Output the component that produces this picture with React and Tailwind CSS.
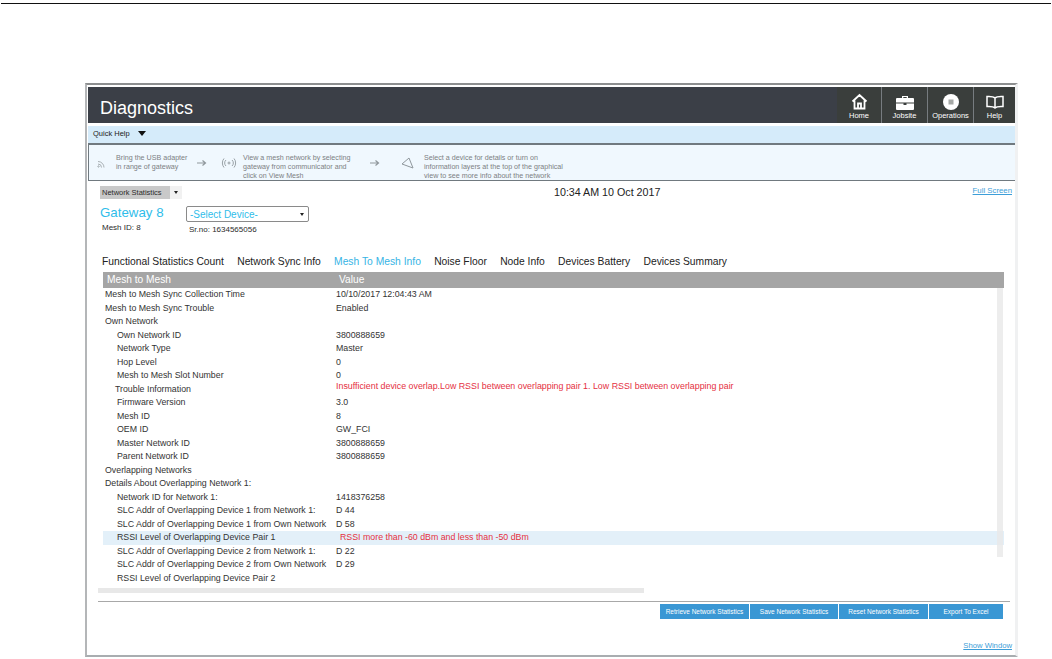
import React from 'react'

const rows = [
  ['Mesh to Mesh Sync Collection Time', '10/10/2017 12:04:43 AM', 0],
  ['Mesh to Mesh Sync Trouble', 'Enabled', 0],
  ['Own Network', '', 0],
  ['Own Network ID', '3800888659', 1],
  ['Network Type', 'Master', 1],
  ['Hop Level', '0', 1],
  ['Mesh to Mesh Slot Number', '0', 1],
  ['Trouble Information', 'Insufficient device overlap.Low RSSI between overlapping pair 1. Low RSSI between overlapping pair', 2],
  ['Firmware Version', '3.0', 1],
  ['Mesh ID', '8', 1],
  ['OEM ID', 'GW_FCI', 1],
  ['Master Network ID', '3800888659', 1],
  ['Parent Network ID', '3800888659', 1],
  ['Overlapping Networks', '', 0],
  ['Details About Overlapping Network 1:', '', 0],
  ['Network ID for Network 1:', '1418376258', 1],
  ['SLC Addr of Overlapping Device 1 from Network 1:', 'D 44', 1],
  ['SLC Addr of Overlapping Device 1 from Own Network', 'D 58', 1],
  ['RSSI Level of Overlapping Device Pair 1', 'RSSI more than -60 dBm and less than -50 dBm', 3],
  ['SLC Addr of Overlapping Device 2 from Network 1:', 'D 22', 1],
  ['SLC Addr of Overlapping Device 2 from Own Network', 'D 29', 1],
  ['RSSI Level of Overlapping Device Pair 2', '', 1],
]

const tabs = ['Functional Statistics Count', 'Network Sync Info', 'Mesh To Mesh Info', 'Noise Floor', 'Node Info', 'Devices Battery', 'Devices Summary']

const buttons = [
  ['Retrieve Network Statistics', 'w-[89px]'],
  ['Save Network Statistics', 'w-[88px]'],
  ['Reset Network Statistics', 'w-[89px]'],
  ['Export To Excel', 'w-[74px]'],
]

const NavItem = ({ label, className, children }) => (
  <div className={`flex flex-col items-center justify-end pb-[2px] bg-[#3a3e3c] text-white text-[7.500px] leading-[10px] ${className}`}>
    {children}
    <span className="mt-[1px]">{label}</span>
  </div>
)

const Arrow = () => (
  <svg className="shrink-0" width="10" height="8" viewBox="0 0 10 8" fill="none" stroke="#8f979c" strokeWidth="1.2">
    <path d="M0 4h8M5.500 1.500 8.500 4l-3 2.500" />
  </svg>
)

const App = () => {
  return (
    <div className="relative w-[1052px] h-[659px] overflow-hidden bg-white text-[#2b2b2b]" style={{ fontFamily: '"Liberation Sans", Arial, sans-serif' }}>
      <div className="h-[4px] mx-[1px] border-b border-[#111]" />
      <div className="ml-[85px] mt-[79px] w-[933px] h-[574px] bg-white border-t-2 border-t-[#8d8f90] border-b-2 border-b-[#a9adb0] border-l-2 border-l-[#b4b6b8] border-r-[3px] border-r-[#f0f1f2] pl-[1px] pt-[2px]">
        <div className="h-[36px] bg-[#3b3f47] flex justify-between">
          <div className="pl-[12px] pt-[8px] text-white text-[18px] leading-[26px]">Diagnostics</div>
          <div className="flex">
            <NavItem label="Home" className="w-[44px]">
              <svg width="17" height="17" viewBox="0 0 17 17" fill="none" stroke="white" strokeWidth="1.8">
                <path d="M1.500 8.500 8.500 2l7 6.500M3.500 7.500v8h10v-8M7 15.500v-5h3v5" />
              </svg>
            </NavItem>
            <NavItem label="Jobsite" className="w-[46px] border-l border-[#777c80]">
              <svg width="18" height="15" viewBox="0 0 18 15" fill="white">
                <path d="M6 3V1h6v2h5a1 1 0 0 1 1 1v3.500H0V4a1 1 0 0 1 1-1zM7.300 3h3.400V2H7.300zM0 8.500h7.500V10h3V8.500H18V14a1 1 0 0 1-1 1H1a1 1 0 0 1-1-1z" />
              </svg>
            </NavItem>
            <NavItem label="Operations" className="w-[46px] border-l border-[#777c80]">
              <svg width="16" height="16" viewBox="0 0 16 16">
                <circle cx="8" cy="8" r="8" fill="white" />
                <rect x="5.500" y="5.500" width="5" height="5" fill="#a5a8a6" />
              </svg>
            </NavItem>
            <NavItem label="Help" className="w-[42px] border-l border-[#777c80]">
              <svg width="18" height="15" viewBox="0 0 18 15" fill="none" stroke="white" strokeWidth="1.500">
                <path d="M9 3C7.500 1.500 4 1.300 1 1.500v10c3-.2 6.500 0 8 1.500 1.500-1.500 5-1.700 8-1.500v-10C14 1.300 10.500 1.500 9 3zM9 3v10" />
              </svg>
            </NavItem>
          </div>
        </div>
        <div className="mt-[3px] h-[19px] bg-[#d5ebfa] border-b-2 border-[#70797f] flex items-center pl-[5px] pb-[2px] text-[7.500px] text-[#222]">
          Quick Help
          <span className="ml-[8px] w-0 h-0 border-l-[4px] border-r-[4px] border-t-[5px] border-l-transparent border-r-transparent border-t-[#111]" />
        </div>
        <div className="h-[36px] bg-[#f0f8fe] border-b border-l border-[#70797f] flex items-center pl-[8px] text-[7.150px] leading-[9px] text-[#7d8083]">
          <svg className="shrink-0" width="10" height="10" viewBox="0 0 10 10" fill="none" stroke="#a9b0b4" strokeWidth="1">
            <path d="M1 3.500a6 6 0 0 1 6 6M1 6a3.500 3.500 0 0 1 3.500 3.500" />
            <circle cx="1.500" cy="8.500" r="0.700" />
          </svg>
          <p className="ml-[9px] w-[81px] self-start mt-[9px]">Bring the USB adapter<br />in range of gateway</p>
          <Arrow />
          <svg className="ml-[14px] shrink-0" width="16" height="10" viewBox="0 0 16 10" fill="none" stroke="#8f979c" strokeWidth="0.900">
            <circle cx="8" cy="5" r="1" />
            <path d="M5 2a4 4 0 0 0 0 6M11 2a4 4 0 0 1 0 6M3 .5a7 7 0 0 0 0 9M13 .5a7 7 0 0 1 0 9" />
          </svg>
          <p className="ml-[6px] w-[127px] self-start mt-[9px]">View a mesh network by selecting<br />gateway from communicator and<br />click on View Mesh</p>
          <Arrow />
          <svg className="ml-[21px] shrink-0" width="14" height="14" viewBox="0 0 14 14" fill="none" stroke="#8f979c" strokeWidth="1">
            <path d="M1 8 8 2l4 10z" />
          </svg>
          <p className="ml-[9px] self-start mt-[9px]">Select a device for details or turn on<br />information layers at the top of the graphical<br />view to see more info about the network</p>
        </div>
        <div className="flex h-[13px] mt-[5px] pl-[12px]">
          <div className="w-[70px] bg-[#c9c9c9] text-[7.500px] leading-[13px] pl-[2px]">Network Statistics</div>
          <div className="w-[12px] bg-[#f1f1f1] flex items-center justify-center">
            <span className="w-0 h-0 border-l-[2.500px] border-r-[2.500px] border-t-[3px] border-l-transparent border-r-transparent border-t-[#222]" />
          </div>
          <div className="ml-[372px] text-[10.700px] leading-[13px] text-[#222]">10:34 AM 10 Oct 2017</div>
          <a className="ml-auto mr-[3px] text-[7.800px] leading-[10px] underline text-[#3d9ed8]">Full Screen</a>
        </div>
        <div className="flex pl-[12px] mt-[7px]">
          <div className="w-[86px] -mt-[1px]">
            <div className="text-[#2fbdea] text-[13.300px] leading-[16px]">Gateway 8</div>
            <div className="text-[8px] leading-[10px] mt-[2px] pl-[2px]">Mesh ID: 8</div>
          </div>
          <div>
            <div className="w-[123px] h-[16px] border border-[#8a8a8a] rounded-[2px] flex items-center justify-between px-[3px] text-[#2fbdea] text-[10px]">
              -Select Device-
              <span className="w-0 h-0 mr-[1px] border-l-[2.500px] border-r-[2.500px] border-t-[3px] border-l-transparent border-r-transparent border-t-[#222]" />
            </div>
            <div className="text-[8px] leading-[10px] mt-[3px] pl-[3px]">Sr.no: 1634565056</div>
          </div>
        </div>
        <div className="flex gap-[13.300px] pl-[14px] mt-[20px] h-[14px] text-[10.300px] leading-[14px] text-[#222]">
          {tabs.map((t) => (
            <span key={t} className={t === 'Mesh To Mesh Info' ? 'text-[#36b4e5]' : ''}>{t}</span>
          ))}
        </div>
        <div className="mt-[3px] ml-[15px] mr-[11px]">
          <div className="h-[16px] bg-[#a5a5a5] flex text-white text-[10.200px] leading-[16px]">
            <div className="w-[236px] pl-[4px]">Mesh to Mesh</div>
            <div>Value</div>
          </div>
          <div className="relative">
            {rows.map(([name, value, kind]) => (
              <div key={name} className={`h-[13.500px] flex text-[8.800px] leading-[13.500px] text-[#333] ${kind === 3 ? 'bg-[#e3f0f9]' : ''}`}>
                <div className={`w-[230px] whitespace-nowrap ${kind === 0 ? 'pl-[2px]' : kind === 2 ? 'pl-[12px]' : 'pl-[14px]'}`}>{name}</div>
                <div className={kind === 2 ? 'pl-[3px] text-[#e5303f] text-[8.850px] -mt-[3px] whitespace-nowrap' : kind === 3 ? 'pl-[7px] text-[#e5303f] whitespace-nowrap' : 'pl-[3px]'}>{value}</div>
              </div>
            ))}
            <div className="absolute right-[1px] top-0 bottom-[28px] w-[6px] bg-[#e8e8e8]/80" />
          </div>
          <div className="mt-[3px] -ml-[5px] w-[546px] h-[5px] bg-[#e8e8e8]" />
        </div>
        <div className="mt-[8px] ml-[10px] mr-[5px] border-t border-[#a8a8a8] flex justify-end pr-[7px] pt-[2px] gap-px">
          {buttons.map(([label, width]) => (
            <div key={label} className={`${width} h-[15px] bg-[#3a97d4] text-white text-[6.500px] leading-[15px] text-center whitespace-nowrap`}>{label}</div>
          ))}
        </div>
        <div className="mt-[12px] pr-[3px] text-right">
          <a className="text-[7.700px] leading-[10px] underline text-[#3d9ed8]">Show Window</a>
        </div>
      </div>
    </div>
  )
}

export default App
